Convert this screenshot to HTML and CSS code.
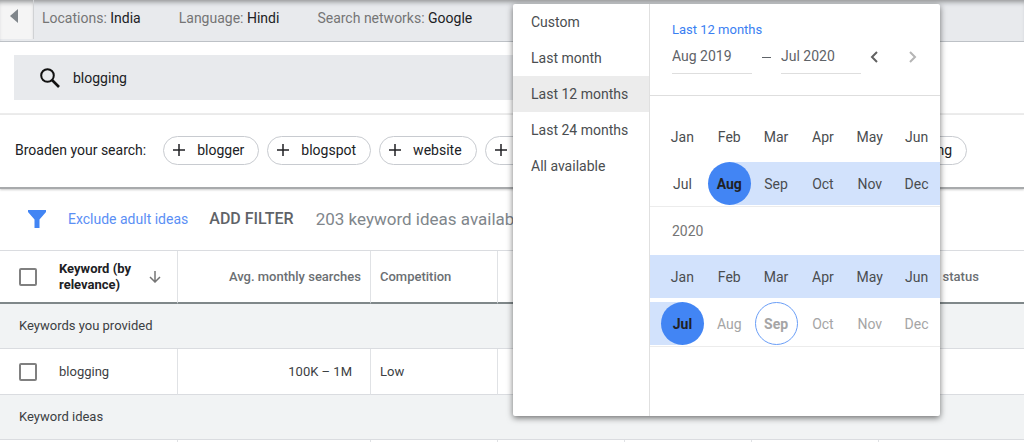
FILE: index.html
```html
<!DOCTYPE html>
<html lang="en">
<head>
<meta charset="utf-8">
<title>Keyword ideas</title>
<link rel="stylesheet" href="styles.css">
</head>
<body>
<header class="topbar">
  <button class="collapse" aria-label="Collapse menu"><svg width="8" height="14" viewBox="0 0 8 14"><path d="M8 0v14L0 7z" fill="#80868b"/></svg></button>
  <div class="settings">
    <span>Locations: <b>India</b></span>
    <span>Language: <b>Hindi</b></span>
    <span>Search networks: <b>Google</b></span>
  </div>
</header>

<section class="search">
  <label class="search-box">
    <svg width="20" height="20" viewBox="0 0 20 20" fill="none" stroke="#111" stroke-width="2"><circle cx="7.5" cy="7.5" r="6.3"/><path d="M12 12l7 7" stroke-width="2.6"/></svg>
    <input type="text" value="blogging" aria-label="Keywords">
  </label>
</section>

<section class="broaden">
  <span>Broaden your search:</span>
  <div class="chips">
    <button class="chip"><svg class="plus" viewBox="0 0 12 12"><path d="M6 0v12M0 6h12"/></svg>blogger</button>
    <button class="chip"><svg class="plus" viewBox="0 0 12 12"><path d="M6 0v12M0 6h12"/></svg>blogspot</button>
    <button class="chip"><svg class="plus" viewBox="0 0 12 12"><path d="M6 0v12M0 6h12"/></svg>website</button>
    <button class="chip"><svg class="plus" viewBox="0 0 12 12"><path d="M6 0v12M0 6h12"/></svg>blog</button>
    <button class="chip last"><svg class="plus" viewBox="0 0 12 12"><path d="M6 0v12M0 6h12"/></svg>marketing</button>
  </div>
</section>

<section class="filters">
  <svg width="18" height="18" viewBox="0 0 18 18"><path d="M0 0h18v2l-6.500 7.500V18h-5V9.500L0 2z" fill="#4285f4"/></svg>
  <a class="exclude" href="#">Exclude adult ideas</a>
  <button class="add">ADD FILTER</button>
  <span class="count">203 keyword ideas available</span>
</section>

<table class="ideas">
  <colgroup><col class="c-key"><col class="c-avg"><col class="c-std"><col class="c-std"><col class="c-std"><col class="c-std"><col></colgroup>
  <thead>
    <tr>
      <th>
        <div class="key-head"><input type="checkbox" aria-label="Select all"><span>Keyword (by relevance)</span>
        <svg width="12" height="12" viewBox="0 0 12 12" fill="none" stroke="#757575" stroke-width="1.500"><path d="M6 0v11M1 6l5 5 5-5"/></svg></div>
      </th>
      <th class="num">Avg. monthly searches</th>
      <th>Competition</th>
      <th></th><th></th><th></th>
      <th class="status">Account status</th>
    </tr>
  </thead>
  <tbody>
    <tr class="group"><td colspan="7">Keywords you provided</td></tr>
    <tr class="row">
      <td><label class="key"><input type="checkbox">blogging</label></td>
      <td class="num value">100K – 1M</td>
      <td>Low</td>
      <td></td><td></td><td></td><td></td>
    </tr>
    <tr class="group"><td colspan="7">Keyword ideas</td></tr>
    <tr><td></td><td></td><td></td><td></td><td></td><td></td><td></td></tr>
  </tbody>
</table>

<div class="picker" role="dialog" aria-label="Date range">
  <div class="presets">
    <button>Custom</button>
    <button>Last month</button>
    <button class="current">Last 12 months</button>
    <button>Last 24 months</button>
    <button>All available</button>
  </div>
  <div class="calendar">
    <div class="range">
      <div class="range-name">Last 12 months</div>
      <div class="range-fields">
        <input type="text" value="Aug 2019" aria-label="From">
        <span class="dash"></span>
        <input type="text" value="Jul 2020" aria-label="To">
        <button class="nav" aria-label="Previous"><svg width="8" height="12" viewBox="0 0 8 12"><path d="M7 1L2 6l5 5"/></svg></button>
        <button class="nav" aria-label="Next" disabled><svg width="8" height="12" viewBox="0 0 8 12"><path d="M1 1l5 5-5 5"/></svg></button>
      </div>
    </div>
    <div class="year">
      <div class="months"><button>Jan</button><button>Feb</button><button>Mar</button><button>Apr</button><button>May</button><button>Jun</button></div>
      <div class="months from"><button>Jul</button><button class="picked">Aug</button><button>Sep</button><button>Oct</button><button>Nov</button><button>Dec</button></div>
    </div>
    <div class="year-name">2020</div>
    <div class="year later">
      <div class="months full"><button>Jan</button><button>Feb</button><button>Mar</button><button>Apr</button><button>May</button><button>Jun</button></div>
      <div class="months to"><button class="picked">Jul</button><button disabled>Aug</button><button class="today" disabled>Sep</button><button disabled>Oct</button><button disabled>Nov</button><button disabled>Dec</button></div>
    </div>
  </div>
</div>
</body>
</html>
```
FILE: styles.css
```css
* { box-sizing: border-box; }
body {
  margin: 0;
  overflow: hidden;
  background: #fff;
  color: #3c4043;
  font: 14px/20px Roboto, "Liberation Sans", sans-serif;
}
button, input { font: inherit; color: inherit; }
button { margin: 0; padding: 0; border: 0; background: none; }
svg { display: block; flex: none; }

.topbar {
  display: flex;
  height: 42px;
  background: #e8eaed;
  border-bottom: 1px solid #bdc1c6;
  box-shadow: inset 0 5px 5px -3px #909294;
}
.collapse {
  display: flex;
  justify-content: flex-end;
  width: 34px;
  height: 39px;
  padding: 9px 15px 0 0;
  border-right: 1px solid #d0d2d4;
  background: #f5f5f5;
  box-shadow: inset 0 5px 5px -3px #909294;
}
.settings {
  display: flex;
  gap: 38px;
  padding: 8px;
  color: #757575;
}
.settings b { font-weight: 400; color: #202124; }

.search {
  padding: 13px 14px;
  border-bottom: 2px solid #ececec;
}
.search-box {
  display: flex;
  align-items: center;
  gap: 13px;
  width: 88%;
  height: 45px;
  padding-left: 26px;
  background: #e8eaed;
}
.search-box input {
  flex: 1;
  padding: 0;
  border: 0;
  background: none;
  color: #202124;
}

.broaden {
  display: flex;
  align-items: center;
  gap: 17px;
  height: 74px;
  padding: 0 57px 2px 15px;
  border-bottom: 2px solid #a8aaac;
  box-shadow: 0 1px 2px #ccc;
  color: #202124;
}
.chips { display: flex; flex: 1; gap: 8px; }
.chip {
  display: flex;
  align-items: center;
  gap: 12px;
  height: 29px;
  padding: 0 14px 0 9px;
  border: 1px solid #c8cbd0;
  border-radius: 15px;
}
.chip.last { margin-left: auto; }
.plus { width: 12px; height: 12px; stroke: #202124; stroke-width: 1.500; }

.filters {
  display: flex;
  align-items: center;
  height: 61px;
  padding: 0 0 2px 28px;
}
.exclude { margin-left: 22px; color: #5b8ff5; text-decoration: none; }
.add { margin-left: 21px; font-size: 16px; font-weight: 500; color: #5f6368; }
.count { margin-left: 22px; font-size: 17px; color: #80868b; }

.ideas {
  width: 100%;
  table-layout: fixed;
  border-collapse: separate;
  border-spacing: 0;
  border-top: 1px solid #dadce0;
  font-size: 13px;
}
.c-key { width: 178px; }
.c-avg { width: 193px; }
.c-std { width: 127px; }
.ideas th, .ideas td {
  height: 46px;
  padding: 0 9px;
  border-right: 1px solid #e0e2e5;
  text-align: left;
}
.ideas th {
  height: 53px;
  border-bottom: 2px solid #7f8789;
  font-weight: 500;
  color: #6b6f73;
}
.ideas th:last-child, .ideas td:last-child { border-right: 0; }
.ideas td { border-bottom: 1px solid #dadce0; }
.ideas th:first-child, .ideas td:first-child { padding-left: 19px; }
.ideas .num { text-align: right; }
.ideas .value { padding-right: 18px; }
.ideas .status { padding-left: 12px; }
.ideas .group td { height: 45px; background: #f1f3f4; }
.key-head, .key { display: flex; align-items: center; }
.key-head { line-height: 16px; color: #202124; font-weight: 700; }
.key-head span { width: 90px; }
.ideas input {
  flex: none;
  appearance: none;
  width: 18px;
  height: 18px;
  margin: 0 22px 0 0;
  border: 2px solid #808080;
  border-radius: 2px;
}

.picker {
  position: absolute;
  top: 4px;
  left: 513px;
  display: flex;
  width: 427px;
  height: 412px;
  background: #fff;
  border-radius: 2px;
  box-shadow: 0 2px 6px #0000008c;
  color: #4a4d50;
}
.presets {
  display: flex;
  flex: none;
  flex-direction: column;
  width: 137px;
  border-right: 1px solid #e0e0e0;
}
.presets button { height: 36px; padding-left: 18px; text-align: left; }
.presets .current { background: #ececec; }
.calendar { flex: 1; min-width: 0; }
.range {
  height: 92px;
  padding: 16px 0 0 22px;
  border-bottom: 1px solid #dedede;
}
.range-name { font-size: 13px; color: #3a80f2; }
.range-fields { display: flex; align-items: center; color: #5f6368; }
.range-fields input {
  flex: none;
  width: 80px;
  height: 34px;
  padding: 0 0 2px;
  border: 0;
  border-bottom: 1px solid #dedede;
  background: none;
}
.dash { width: 9px; height: 1px; margin: 0 10px; background: #5f6368; }
.nav { display: flex; justify-content: center; width: 26px; }
.nav + .nav { margin-left: 13px; }
.nav path { fill: none; stroke: #616161; stroke-width: 2; }
.nav:disabled path { stroke: #b5b5b5; }
.year {
  display: grid;
  gap: 4px;
  padding: 19px 0 1px;
  border-bottom: 1px solid #ececec;
}
.year.later { padding-top: 0; }
.year-name { padding: 14px 22px; color: #757575; }
.months {
  display: grid;
  grid-template-columns: repeat(6, 1fr);
  justify-items: center;
  height: 43px;
  padding-left: 9px;
}
.months button { width: 43px; height: 43px; border-radius: 50%; }
.months.from { background: linear-gradient(to right, #fff 80px, #d2e2fc 80px); }
.months.full { background: #d2e2fc; }
.months.to { background: linear-gradient(to right, #d2e2fc 32px, #fff 32px); }
.months button:disabled { color: #a5a5a5; }
.months .picked { background: #4285f4; color: #202124; font-weight: 700; }
.months .today { border: 1px solid #6a9ef7; font-weight: 700; }
```
